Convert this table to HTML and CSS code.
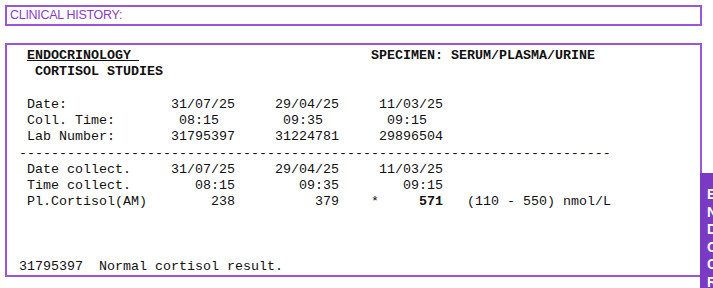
FILE: index.html
```html
<!DOCTYPE html>
<html>
<head>
<meta charset="utf-8">
<link rel="stylesheet" href="styles.css">
</head>
<body>
<div class="history">CLINICAL HISTORY:</div>
<div class="report">
<div class="ln"> <b class="u">ENDOCRINOLOGY </b>                             <b>SPECIMEN: SERUM/PLASMA/URINE</b></div>
<div class="ln"><b>  CORTISOL STUDIES</b></div>
<div class="ln"> </div>
<div class="ln"> Date:             31/07/25     29/04/25     11/03/25</div>
<div class="ln"> Coll. Time:        08:15        09:35        09:15</div>
<div class="ln"> Lab Number:       31795397     31224781     29896504</div>
<div class="ln">--------------------------------------------------------------------------</div>
<div class="ln"> Date collect.     31/07/25     29/04/25     11/03/25</div>
<div class="ln"> Time collect.        08:15        09:35        09:15</div>
<div class="ln"> Pl.Cortisol(AM)        238          379    *     <b>571</b>   (110 - 550) nmol/L</div>
<div class="ln"> </div>
<div class="ln"> </div>
<div class="ln"> </div>
<div class="ln">31795397  Normal cortisol result.</div>
</div>
<div class="tab"><span>E</span><span>N</span><span>D</span><span>O</span><span>C</span><span>R</span><span>I</span><span>N</span><span>E</span></div>
</body>
</html>
```
FILE: styles.css
```css
html, body {
  margin: 0;
  padding: 0;
  background: #ffffff;
  overflow: hidden;
  width: 713px;
  height: 288px;
}
body {
  position: relative;
}
.history {
  box-sizing: border-box;
  margin: 5px 0 0 5px;
  width: 697px;
  height: 21px;
  border: 2px solid #9b55d8;
  padding: 0 0 0 3px;
  font-family: "Liberation Sans", Arial, sans-serif;
  font-size: 12.5px;
  line-height: 17px;
  color: #8a3bcf;
  letter-spacing: -0.3px;
}
.report {
  box-sizing: border-box;
  margin: 17px 0 0 5px;
  width: 697px;
  height: 234px;
  border: 2px solid #9b55d8;
  padding: 3px 0 0 12px;
  font-family: "Liberation Mono", "Courier New", monospace;
  font-size: 13.333px;
  line-height: 16.25px;
  color: #111111;
}
.ln {
  white-space: pre;
  height: 16.25px;
}
.u {
  text-decoration: underline;
}
.tab {
  position: absolute;
  left: 700px;
  top: 173px;
  width: 22px;
  height: 120px;
  background: #7b3ac4;
  box-sizing: border-box;
  padding: 13px 0 0 7px;
  display: flex;
  flex-direction: column;
  font-family: "Liberation Sans", Arial, sans-serif;
  font-weight: bold;
  font-size: 14px;
  line-height: 17.5px;
  color: #ffffff;
  overflow: hidden;
}
```
